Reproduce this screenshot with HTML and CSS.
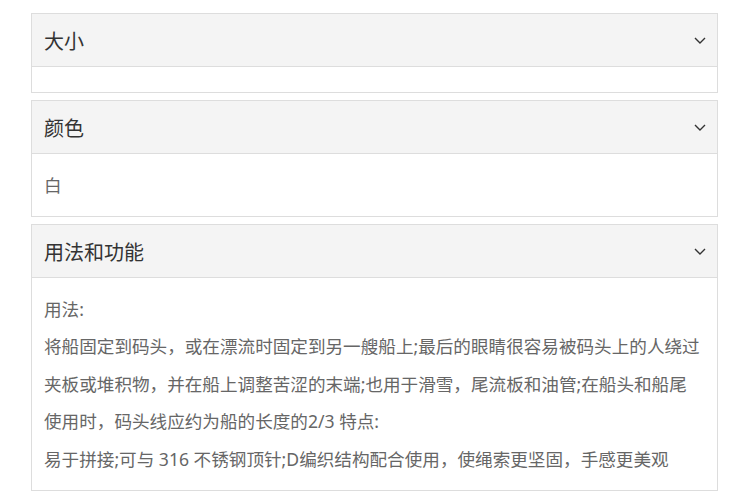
FILE: index.html
```html
<!DOCTYPE html>
<html lang="zh-CN">
<head>
  <meta charset="UTF-8">
  <meta name="viewport" content="width=device-width, initial-scale=1.0">
  <title>产品详情</title>
  <link rel="stylesheet" href="styles.css">
</head>
<body>
  <div class="panel">
    <div class="panel-head">
      <span>大小</span>
      <svg class="arrow" width="12" height="7" viewBox="0 0 12 7"><path d="M1 1l5 5 5-5" fill="none" stroke="#333" stroke-width="1.4"/></svg>
    </div>
    <div class="panel-body"></div>
  </div>

  <div class="panel">
    <div class="panel-head">
      <span>颜色</span>
      <svg class="arrow" width="12" height="7" viewBox="0 0 12 7"><path d="M1 1l5 5 5-5" fill="none" stroke="#333" stroke-width="1.4"/></svg>
    </div>
    <div class="panel-body">
      <p>白</p>
    </div>
  </div>

  <div class="panel">
    <div class="panel-head">
      <span>用法和功能</span>
      <svg class="arrow" width="12" height="7" viewBox="0 0 12 7"><path d="M1 1l5 5 5-5" fill="none" stroke="#333" stroke-width="1.4"/></svg>
    </div>
    <div class="panel-body">
      <p>用法:</p>
      <p>将船固定到码头，或在漂流时固定到另一艘船上;最后的眼睛很容易被码头上的人绕过夹板或堆积物，并在船上调整苦涩的末端;也用于滑雪，尾流板和油管;在船头和船尾使用时，码头线应约为船的长度的2/3 特点:</p>
      <p>易于拼接;可与 316 不锈钢顶针;D编织结构配合使用，使绳索更坚固，手感更美观</p>
    </div>
  </div>
</body>
</html>
```

FILE: styles.css
```css
body {
  margin: 0;
  padding: 13px 31px;
  font-family: "Noto Sans", "Noto Sans CJK SC", sans-serif;
  background: #fff;
}
.panel {
  border: 1px solid #ddd;
  margin-bottom: 7px;
}
.panel-head {
  height: 52px;
  display: flex;
  align-items: center;
  justify-content: space-between;
  padding: 0 11px 0 12px;
  background: #f4f4f4;
  border-bottom: 1px solid #ddd;
  font-size: 20px;
  color: #333;
}
.panel-body {
  padding: 12.5px 15px 12.5px 12px;
  font-size: 17.6px;
  line-height: 37.4px;
  color: #666;
}
.panel-body p {
  margin: 0;
}
```
